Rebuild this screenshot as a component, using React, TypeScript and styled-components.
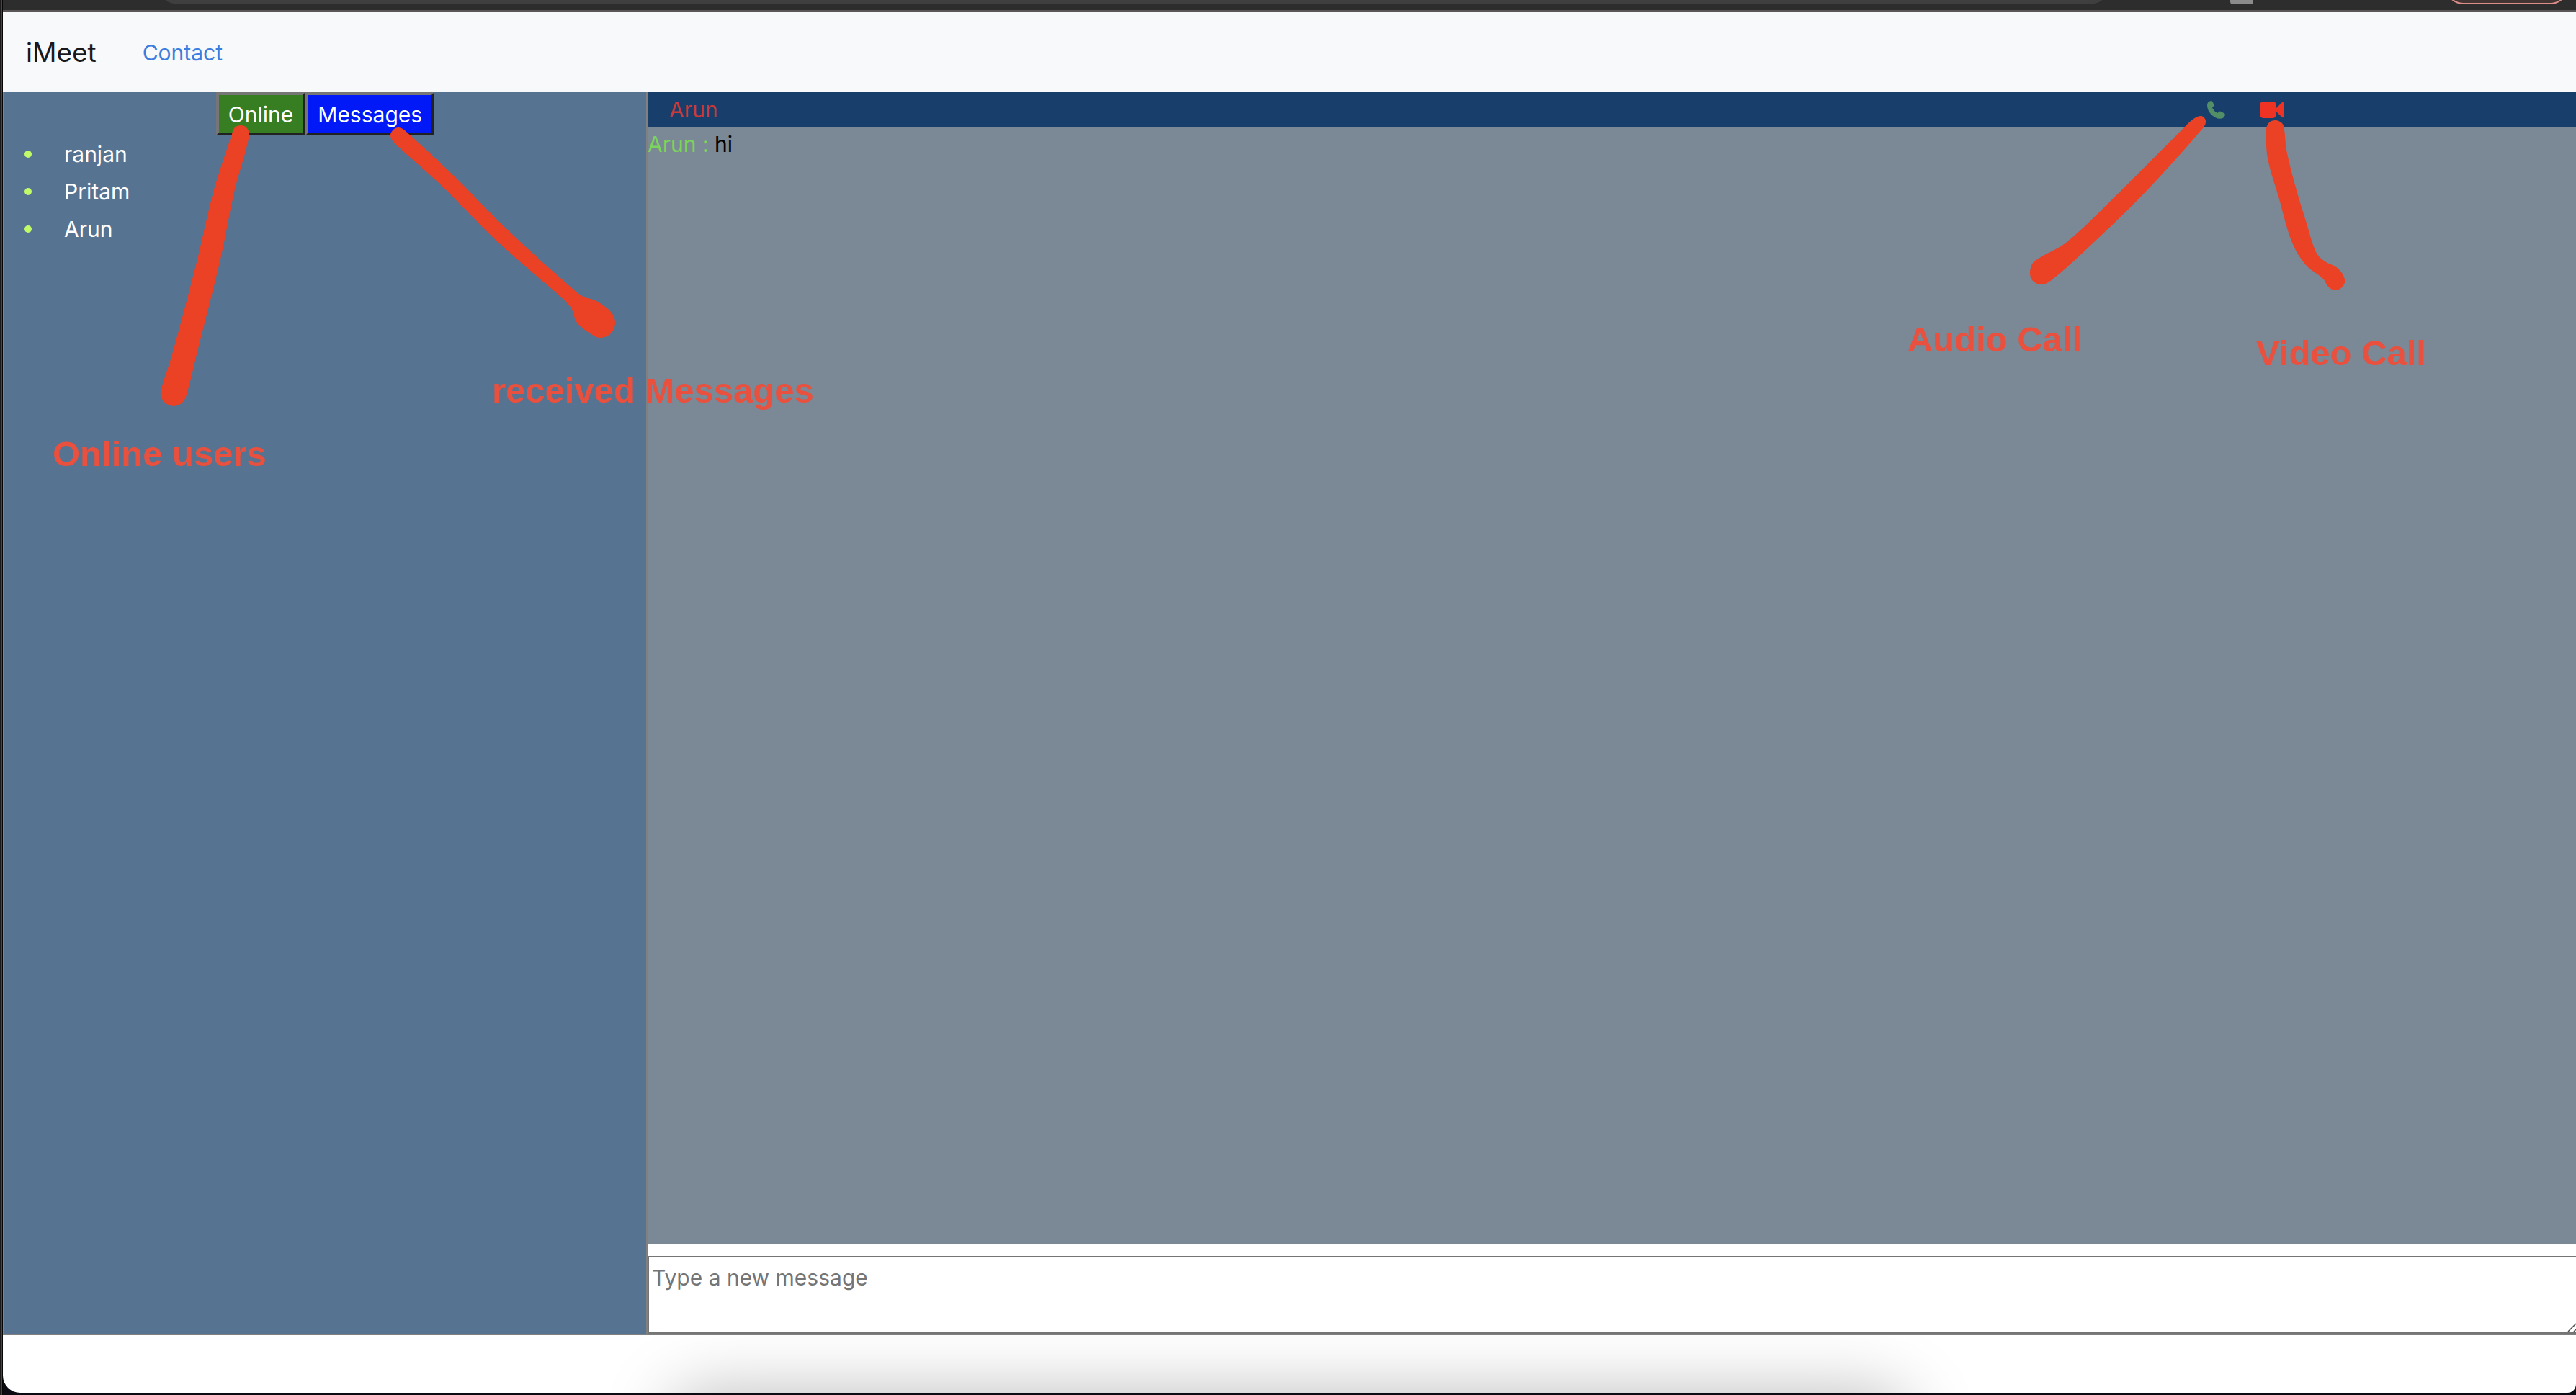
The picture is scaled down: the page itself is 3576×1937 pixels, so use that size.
import React from "react";
import styled, { createGlobalStyle } from "styled-components";

const GlobalStyle = createGlobalStyle`
  * { box-sizing: border-box; }
  html, body { margin: 0; padding: 0; }
  body {
    background: #0b0a10;
    font-family: Inter, "Liberation Sans", sans-serif;
    font-size: 30px;
    line-height: 48px;
    color: #212529;
  }
  button, textarea { font: inherit; margin: 0; }
`;

const MARK = "#eb4125";

const Desktop = styled.div`
  position: relative;
  height: 100vh;
  padding: 0 0 3px 4px;
  overflow: hidden;
  background: linear-gradient(90deg, #1c1a1a 0 1px, #050505 1px 2px, #4a4847 2px 3px, #050505 3px 4px, #0d0b12 4px);
`;

const BrowserWindow = styled.div`
  display: flex;
  flex-direction: column;
  height: 100%;
  background: #ffffff;
  border-radius: 0 0 12px 24px;
  overflow: hidden;
`;

const Chrome = styled.div`
  display: flex;
  align-items: flex-end;
  flex: none;
  height: 16px;
  padding: 0 10px 8px 215px;
  border-bottom: 2px solid #5b5757;
  background: #2d2d2d;
  overflow: hidden;
`;

const AddressBar = styled.div`
  flex: 1;
  height: 56px;
  border-radius: 28px;
  background: #3f3f3f;
`;

const ExtensionBadge = styled.div`
  width: 32px;
  height: 24px;
  margin: 0 266px 0 167px;
  border-radius: 4px;
  background: #8b8b8b;
`;

const UpdatePill = styled.div`
  width: 172px;
  height: 52px;
  border: 2px solid #dc8f89;
  border-radius: 26px;
  background: #433434;
`;

const Navbar = styled.nav`
  display: flex;
  align-items: center;
  flex: none;
  gap: 64px;
  height: 112px;
  padding: 2px 32px 0;
  background: #f8f9fb;
`;

const Brand = styled.a`
  font-size: 37px;
  line-height: 60px;
  color: #19191b;
  text-decoration: none;
`;

const NavLink = styled.a`
  color: #3c7ddd;
  text-decoration: none;
`;

const Main = styled.main`
  display: grid;
  grid-template-columns: 1fr 3fr;
  flex: 1;
  min-height: 0;
  border-bottom: 2px solid #808080;
`;

const Sidebar = styled.aside`
  border-left: 2px solid #7488a0;
  background: #567391;
`;

const Tabs = styled.div`
  display: flex;
  justify-content: center;
`;

const TabButton = styled.button<{ $fill: string }>`
  height: 60px;
  padding: 2px 13px 0;
  border: 4px solid;
  border-color: #767676 #212121 #212121 #767676;
  background: ${(p) => p.$fill};
  color: #ffffff;
`;

const UserList = styled.ul`
  display: grid;
  gap: 4px;
  margin: 2px 0 0;
  padding: 0 0 0 28px;
  list-style: none;
`;

const UserItem = styled.li`
  display: flex;
  align-items: center;
  gap: 45px;
  color: #ffffff;

  &::before {
    content: "";
    width: 10px;
    height: 10px;
    border-radius: 50%;
    background: #c2fb68;
  }
`;

const Chat = styled.section`
  display: flex;
  flex-direction: column;
  min-width: 0;
  border-left: 2px solid #808080;
`;

const ChatHeader = styled.header`
  display: flex;
  align-items: center;
  flex: none;
  height: 48px;
  padding: 0 406px 0 30px;
  background: #183f6c;
`;

const PeerName = styled.span`
  flex: 1;
  color: #cb3a3a;
`;

const CallButton = styled.button`
  display: flex;
  margin-left: 48px;
  padding: 0;
  border: 0;
  background: none;
`;

const Conversation = styled.div`
  flex: 1;
  min-height: 0;
  background: #7b8896;
  color: #000000;
`;

const Message = styled.p`
  margin: 0;
`;

const Sender = styled.span`
  color: #7bd45c;
`;

const Composer = styled.form`
  position: relative;
  display: flex;
  flex: none;
  padding-top: 16px;
`;

const MessageBox = styled.textarea`
  flex: 1;
  height: 108px;
  padding: 4px;
  border: 2px solid #757575;
  border-right: 0;
  border-radius: 0;
  outline: 0;
  resize: none;
  background: #ffffff;
  color: #000000;

  &::placeholder { color: #757575; opacity: 1; }
`;

const Grip = styled.svg`
  position: absolute;
  right: 0;
  bottom: 3px;
`;

const Footer = styled.footer`
  position: relative;
  flex: none;
  height: 80px;
  overflow: hidden;
`;

const DockShadow = styled.div`
  position: absolute;
  left: 26%;
  right: 26%;
  top: 100%;
  height: 120px;
  border-radius: 40px;
  box-shadow: 0 0 96px rgba(0, 0, 0, 0.27);
`;

const Strokes = styled.svg<{ $side: "left" | "right" }>`
  position: absolute;
  top: 0;
  ${(p) => p.$side}: 0;
  pointer-events: none;
`;

const Note = styled.span<{ $top: number; $left?: number; $right?: number }>`
  position: absolute;
  top: ${(p) => p.$top}px;
  ${(p) => (p.$left !== undefined ? `left: ${p.$left}px;` : `right: ${p.$right}px;`)}
  font: bold 49px/56px "Liberation Sans", Arial, sans-serif;
  color: #e9503e;
  white-space: nowrap;
`;

type Point = [number, number];

/* Closed smooth outline through the given points. */
function outline(points: Point[]): string {
  const n = points.length;
  let d = `M${points[0][0]} ${points[0][1]}`;
  for (let i = 0; i < n; i++) {
    const a = points[(i + n - 1) % n];
    const b = points[i];
    const c = points[(i + 1) % n];
    const e = points[(i + 2) % n];
    const reach = Math.hypot(c[0] - b[0], c[1] - b[1]) / 3;
    const t1 = Math.hypot(c[0] - a[0], c[1] - a[1]) || 1;
    const t2 = Math.hypot(e[0] - b[0], e[1] - b[1]) || 1;
    d += `C${b[0] + ((c[0] - a[0]) / t1) * reach} ${b[1] + ((c[1] - a[1]) / t1) * reach} `;
    d += `${c[0] - ((e[0] - b[0]) / t2) * reach} ${c[1] - ((e[1] - b[1]) / t2) * reach} ${c[0]} ${c[1]}`;
  }
  return d + "Z";
}

const onlineStroke: Point[] = [
  [322, 186], [326, 177], [334, 174], [342, 177], [346, 188], [325, 267], [306, 360],
  [274, 488], [259, 548], [253, 559], [241, 564], [229, 559], [223, 548], [225, 536], [239, 492],
  [274, 360], [296, 267],
];
const messagesStroke: Point[] = [
  [542, 189], [546, 180], [554, 177], [563, 182], [634, 248], [688, 303], [741, 353], [786, 393],
  [808, 411], [828, 418], [848, 433], [854, 448], [848, 463], [833, 469], [819, 463], [801, 448],
  [791, 425], [741, 380], [688, 333], [652, 297], [607, 252], [549, 200],
];
const audioStroke: Point[] = [
  [3056, 161], [3062, 168], [3058, 178], [2973, 272], [2889, 353],
  [2849, 388], [2835, 395], [2822, 390], [2818, 378], [2824, 363], [2868, 337], [2936, 273],
  [3033, 176], [3045, 165],
];
const videoStroke: Point[] = [
  [3159, 167], [3168, 171], [3171, 180], [3174, 208], [3186, 257], [3201, 307], [3215, 350],
  [3226, 362], [3246, 373], [3255, 388], [3252, 398], [3242, 403], [3232, 398], [3225, 387],
  [3201, 368], [3182, 337], [3163, 273], [3148, 220], [3146, 180], [3150, 170],
];

const users = ["ranjan", "Pritam", "Arun"];

const tabs = [
  { label: "Online", fill: "#377d22" },
  { label: "Messages", fill: "#0019f6" },
];

function PhoneIcon() {
  return (
    <svg width="25" height="25" viewBox="71 57 76 75" aria-hidden="true">
      <path
        fill="#528f67"
        d="M85 57.500Q91 55 94 61L100 73Q101 77 97 80L92 84Q98 100 115 108L120 102Q123 99 127 101L143 109Q148 112 146 118Q141 132 125 132Q106 131 88 114Q71 96 71 75Q72 60 85 57.500Z"
      />
    </svg>
  );
}

function VideoIcon() {
  return (
    <svg width="33" height="23" viewBox="0 0 33 23" aria-hidden="true">
      <rect width="23" height="23" rx="5" fill="#ee3224" />
      <path fill="#ee3224" d="M23 9L31 1Q33 0 33 2V21Q33 23 31 22L23 14Z" />
    </svg>
  );
}

export default function App() {
  return (
    <Desktop>
      <GlobalStyle />
      <BrowserWindow>
        <Chrome>
          <AddressBar />
          <ExtensionBadge />
          <UpdatePill />
        </Chrome>
        <Navbar>
          <Brand href="#home">iMeet</Brand>
          <NavLink href="#contact">Contact</NavLink>
        </Navbar>
        <Main>
          <Sidebar>
            <Tabs>
              {tabs.map((tab) => (
                <TabButton key={tab.label} type="button" $fill={tab.fill}>
                  {tab.label}
                </TabButton>
              ))}
            </Tabs>
            <UserList>
              {users.map((user) => (
                <UserItem key={user}>{user}</UserItem>
              ))}
            </UserList>
          </Sidebar>
          <Chat>
            <ChatHeader>
              <PeerName>Arun</PeerName>
              <CallButton type="button" aria-label="Audio call">
                <PhoneIcon />
              </CallButton>
              <CallButton type="button" aria-label="Video call">
                <VideoIcon />
              </CallButton>
            </ChatHeader>
            <Conversation>
              <Message>
                <Sender>Arun :</Sender> hi
              </Message>
            </Conversation>
            <Composer>
              <MessageBox aria-label="New message" placeholder="Type a new message" />
              <Grip width="12" height="12" viewBox="0 0 12 12" aria-hidden="true">
                <path d="M1 12L12 1M9 12L12 9" stroke="#4c4c4c" strokeWidth="1.500" />
              </Grip>
            </Composer>
          </Chat>
        </Main>
        <Footer>
          <DockShadow />
        </Footer>
      </BrowserWindow>

      <Strokes $side="left" width="900" height="600" viewBox="0 0 900 600" aria-hidden="true">
        <path fill={MARK} d={outline(onlineStroke)} />
        <path fill={MARK} d={outline(messagesStroke)} />
      </Strokes>
      <Strokes $side="right" width="800" height="600" viewBox="2776 0 800 600" aria-hidden="true">
        <path fill={MARK} d={outline(audioStroke)} />
        <path fill={MARK} d={outline(videoStroke)} />
      </Strokes>
      <Note $top={602} $left={73}>Online users</Note>
      <Note $top={514} $left={683}>received Messages</Note>
      <Note $top={443} $right={686}>Audio Call</Note>
      <Note $top={462} $right={208}>Video Call</Note>
    </Desktop>
  );
}
